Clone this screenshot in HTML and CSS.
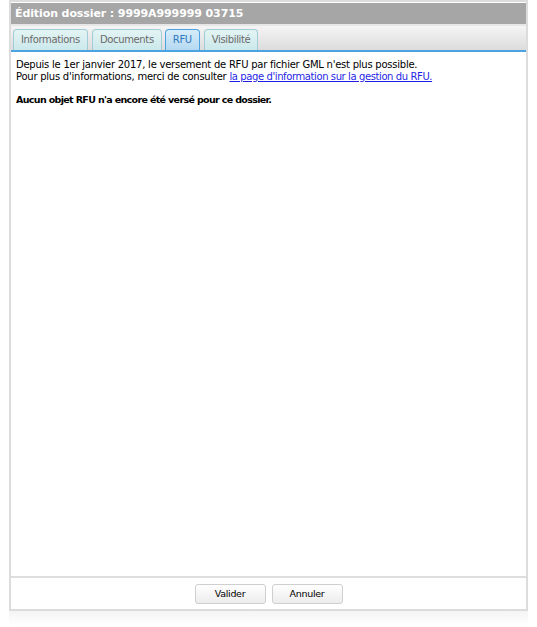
FILE: index.html
```html
<!DOCTYPE html>
<html lang="fr">
<head>
<meta charset="utf-8">
<title>Édition dossier</title>
<link rel="stylesheet" href="styles.css">
</head>
<body>
<div class="dialog">
  <div class="titlebar">Édition dossier : 9999A999999 03715</div>
  <div class="tabbar">
    <div class="tab">Informations</div>
    <div class="tab">Documents</div>
    <div class="tab active">RFU</div>
    <div class="tab">Visibilité</div>
  </div>
  <div class="content">
    <p class="line">Depuis le 1er janvier 2017, le versement de RFU par fichier GML n'est plus possible.</p>
    <p class="line">Pour plus d'informations, merci de consulter <a href="#" class="link">la page d'information sur la gestion du RFU.</a></p>
    <p class="notice">Aucun objet RFU n'a encore été versé pour ce dossier.</p>
  </div>
  <div class="footer">
    <button class="btn">Valider</button>
    <button class="btn">Annuler</button>
  </div>
</div>
<div class="shadow"></div>
</body>
</html>
```
FILE: styles.css
```css
html, body {
  margin: 0;
  padding: 0;
  background: #ffffff;
}
body {
  font-family: "DejaVu Sans", Verdana, sans-serif;
  color: #000;
}
.dialog {
  margin-left: 9px;
  width: 519px;
  height: 611px;
  box-sizing: border-box;
  border: 2px solid #dcdcdc;
  display: flex;
  flex-direction: column;
  background: #fff;
}
.titlebar {
  height: 21px;
  margin-top: 1px;
  background: #a6a6a6;
  color: #fff;
  font-weight: bold;
  font-size: 11px;
  letter-spacing: -0.1px;
  line-height: 21px;
  padding-left: 4px;
  border-bottom: 2px solid #e6e6e6;
}
.tabbar {
  height: 24px;
  background: linear-gradient(#f5f5f5, #dcdcdc);
  border-bottom: 2px solid #4ba4e1;
  display: flex;
  align-items: flex-end;
  gap: 3px;
  padding-left: 2px;
}
.tab {
  height: 21px;
  box-sizing: border-box;
  border: 1px solid #a2cdd6;
  border-bottom: none;
  border-radius: 4px 4px 0 0;
  background: linear-gradient(#e4f4f4, #cbe8eb);
  color: #6a6a6a;
  font-size: 10px;
  letter-spacing: -0.35px;
  line-height: 20px;
  padding: 0 7px;
}
.tab:nth-child(2) {
  margin-left: 1px;
}
.tab.active {
  background: linear-gradient(#d6ecf9, #b5d9f2);
  border-color: #4ba4e1;
  color: #2f78c0;
}
.tab:last-child {
  margin-left: 1px;
}
.content {
  flex: 1;
  padding: 7px 5px 0 5px;
  font-size: 10px;
  letter-spacing: -0.24px;
}
.line {
  margin: 0;
  line-height: 12px;
}
.link {
  color: #1f1fe6;
  text-decoration: underline;
  letter-spacing: -0.4px;
}
.notice {
  margin: 11px 0 0 0;
  font-weight: bold;
  font-size: 9.5px;
  letter-spacing: -0.65px;
  line-height: 12px;
}
.footer {
  border-top: 2px solid #dedede;
  height: 31px;
  display: flex;
  justify-content: center;
  align-items: center;
  gap: 6px;
}
.btn {
  width: 71px;
  height: 20px;
  border: 1px solid #cfcfcf;
  border-radius: 3px;
  background: linear-gradient(#ffffff, #ececec);
  font-family: "DejaVu Sans", Verdana, sans-serif;
  font-size: 9.5px;
  letter-spacing: -0.3px;
  color: #000;
  padding: 0;
}
.shadow {
  margin-left: 9px;
  width: 519px;
  height: 14px;
  background: linear-gradient(#f4f4f4, #ffffff);
}
```
